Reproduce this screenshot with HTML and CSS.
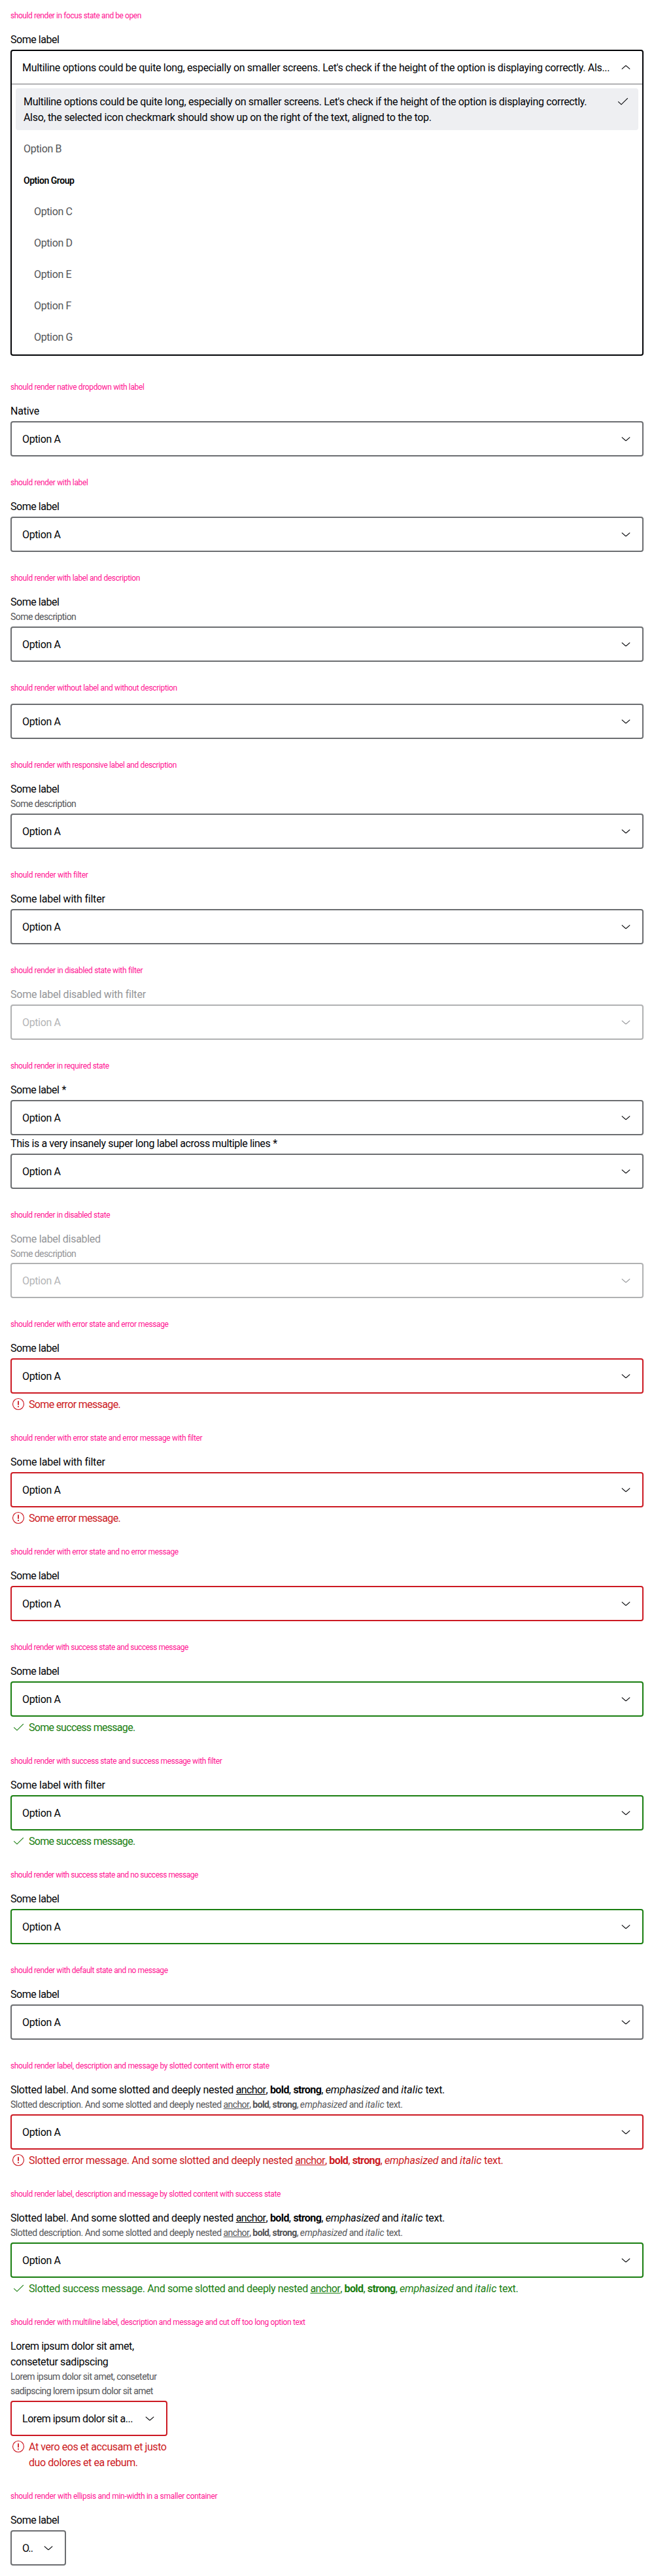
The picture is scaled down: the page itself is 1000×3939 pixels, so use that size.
FILE: index.html
```
<!DOCTYPE html>
<html lang="en">
<head>
<meta charset="utf-8">
<title>Select wrapper</title>
<link rel="stylesheet" href="styles.css">
</head>
<body>
<svg class="sprite" aria-hidden="true">
  <symbol id="down" viewBox="0 0 24 24"><path d="M5.8 9.6 11.6 14.6h.8L18.2 9.6"/></symbol>
  <symbol id="up" viewBox="0 0 24 24"><path d="M5.8 14.6 11.6 9.6h.8L18.2 14.6"/></symbol>
  <symbol id="check" viewBox="0 0 24 24"><path d="M5.2 12.3 10 16.8 19.8 7.2"/></symbol>
  <symbol id="error" viewBox="0 0 24 24"><circle cx="12" cy="12" r="8.5"/><path class="mark" d="M12 7.3v6.2M12 15v1.8"/></symbol>
</svg>

<section class="case case-open">
  <h2 class="title k43">should render in focus state and be open</h2>
  <div class="field">
    <div class="label k45">Some label</div>
    <div class="dropdown">
      <div class="select"><span class="value k32">Multiline options could be quite long, especially on smaller screens. Let's check if the height of the option is displaying correctly. Als...</span><svg class="icon"><use href="#up"/></svg></div>
      <ul class="options">
        <li class="option selected"><span class="k32">Multiline options could be quite long, especially on smaller screens. Let's check if the height of the option is displaying correctly.<br>Also, the selected icon checkmark should show up on the right of the text, aligned to the top.</span><svg class="icon"><use href="#check"/></svg></li>
        <li class="option">Option B</li>
        <li class="option group">Option Group</li>
        <li class="option nested">Option C</li>
        <li class="option nested">Option D</li>
        <li class="option nested">Option E</li>
        <li class="option nested">Option F</li>
        <li class="option nested">Option G</li>
      </ul>
    </div>
  </div>
</section>

<section class="case">
  <h2 class="title k35">should render native dropdown with label</h2>
  <div class="field">
    <div class="label k22">Native</div>
    <div class="select"><span class="value">Option A</span><svg class="icon"><use href="#down"/></svg></div>
  </div>
</section>

<section class="case">
  <h2 class="title k35">should render with label</h2>
  <div class="field">
    <div class="label k45">Some label</div>
    <div class="select"><span class="value">Option A</span><svg class="icon"><use href="#down"/></svg></div>
  </div>
</section>

<section class="case">
  <h2 class="title k36">should render with label and description</h2>
  <div class="field">
    <div class="label k45">Some label</div>
    <div class="description">Some description</div>
    <div class="select"><span class="value">Option A</span><svg class="icon"><use href="#down"/></svg></div>
  </div>
</section>

<section class="case">
  <h2 class="title k35">should render without label and without description</h2>
  <div class="field">
    <div class="select"><span class="value">Option A</span><svg class="icon"><use href="#down"/></svg></div>
  </div>
</section>

<section class="case">
  <h2 class="title k38">should render with responsive label and description</h2>
  <div class="field">
    <div class="label k45">Some label</div>
    <div class="description">Some description</div>
    <div class="select"><span class="value">Option A</span><svg class="icon"><use href="#down"/></svg></div>
  </div>
</section>

<section class="case">
  <h2 class="title k29">should render with filter</h2>
  <div class="field">
    <div class="label k22">Some label with filter</div>
    <div class="select"><span class="value">Option A</span><svg class="icon"><use href="#down"/></svg></div>
  </div>
</section>

<section class="case">
  <h2 class="title k33">should render in disabled state with filter</h2>
  <div class="field disabled">
    <div class="label k22">Some label disabled with filter</div>
    <div class="select"><span class="value">Option A</span><svg class="icon"><use href="#down"/></svg></div>
  </div>
</section>

<section class="case">
  <h2 class="title k37">should render in required state</h2>
  <div class="field">
    <div class="label k45">Some label<span class="required">*</span></div>
    <div class="select"><span class="value">Option A</span><svg class="icon"><use href="#down"/></svg></div>
  </div>
  <div class="field">
    <div class="label k40">This is a very insanely super long label across multiple lines<span class="required">*</span></div>
    <div class="select"><span class="value">Option A</span><svg class="icon"><use href="#down"/></svg></div>
  </div>
</section>

<section class="case">
  <h2 class="title k37">should render in disabled state</h2>
  <div class="field disabled">
    <div class="label k29">Some label disabled</div>
    <div class="description">Some description</div>
    <div class="select"><span class="value">Option A</span><svg class="icon"><use href="#down"/></svg></div>
  </div>
</section>

<section class="case">
  <h2 class="title k38">should render with error state and error message</h2>
  <div class="field error">
    <div class="label k45">Some label</div>
    <div class="select"><span class="value">Option A</span><svg class="icon"><use href="#down"/></svg></div>
    <div class="message k64"><svg class="icon"><use href="#error"/></svg><span>Some error message.</span></div>
  </div>
</section>

<section class="case">
  <h2 class="title k32">should render with error state and error message with filter</h2>
  <div class="field error">
    <div class="label k22">Some label with filter</div>
    <div class="select"><span class="value">Option A</span><svg class="icon"><use href="#down"/></svg></div>
    <div class="message k64"><svg class="icon"><use href="#error"/></svg><span>Some error message.</span></div>
  </div>
</section>

<section class="case">
  <h2 class="title k38">should render with error state and no error message</h2>
  <div class="field error">
    <div class="label k45">Some label</div>
    <div class="select"><span class="value">Option A</span><svg class="icon"><use href="#down"/></svg></div>
  </div>
</section>

<section class="case">
  <h2 class="title k49">should render with success state and success message</h2>
  <div class="field success">
    <div class="label k45">Some label</div>
    <div class="select"><span class="value">Option A</span><svg class="icon"><use href="#down"/></svg></div>
    <div class="message k71"><svg class="icon"><use href="#check"/></svg><span>Some success message.</span></div>
  </div>
</section>

<section class="case">
  <h2 class="title k42">should render with success state and success message with filter</h2>
  <div class="field success">
    <div class="label k22">Some label with filter</div>
    <div class="select"><span class="value">Option A</span><svg class="icon"><use href="#down"/></svg></div>
    <div class="message k71"><svg class="icon"><use href="#check"/></svg><span>Some success message.</span></div>
  </div>
</section>

<section class="case">
  <h2 class="title k49">should render with success state and no success message</h2>
  <div class="field success">
    <div class="label k45">Some label</div>
    <div class="select"><span class="value">Option A</span><svg class="icon"><use href="#down"/></svg></div>
  </div>
</section>

<section class="case">
  <h2 class="title k41">should render with default state and no message</h2>
  <div class="field">
    <div class="label k45">Some label</div>
    <div class="select"><span class="value">Option A</span><svg class="icon"><use href="#down"/></svg></div>
  </div>
</section>

<section class="case">
  <h2 class="title k35">should render label, description and message by slotted content with error state</h2>
  <div class="field error">
    <div class="label k29">Slotted label. And some slotted and deeply nested <a href="#">anchor</a>, <b>bold</b>, <strong>strong</strong>, <em>emphasized</em> and <i>italic</i> text.</div>
    <div class="description k51">Slotted description. And some slotted and deeply nested <a href="#">anchor</a>, <b>bold</b>, <strong>strong</strong>, <em>emphasized</em> and <i>italic</i> text.</div>
    <div class="select"><span class="value">Option A</span><svg class="icon"><use href="#down"/></svg></div>
    <div class="message k36"><svg class="icon"><use href="#error"/></svg><span>Slotted error message. And some slotted and deeply nested <a href="#">anchor</a>, <b>bold</b>, <strong>strong</strong>, <em>emphasized</em> and <i>italic</i> text.</span></div>
  </div>
</section>

<section class="case">
  <h2 class="title k36">should render label, description and message by slotted content with success state</h2>
  <div class="field success">
    <div class="label k29">Slotted label. And some slotted and deeply nested <a href="#">anchor</a>, <b>bold</b>, <strong>strong</strong>, <em>emphasized</em> and <i>italic</i> text.</div>
    <div class="description k51">Slotted description. And some slotted and deeply nested <a href="#">anchor</a>, <b>bold</b>, <strong>strong</strong>, <em>emphasized</em> and <i>italic</i> text.</div>
    <div class="select"><span class="value">Option A</span><svg class="icon"><use href="#down"/></svg></div>
    <div class="message k38"><svg class="icon"><use href="#check"/></svg><span>Slotted success message. And some slotted and deeply nested <a href="#">anchor</a>, <b>bold</b>, <strong>strong</strong>, <em>emphasized</em> and <i>italic</i> text.</span></div>
  </div>
</section>

<section class="case">
  <h2 class="title k35">should render with multiline label, description and message and cut off too long option text</h2>
  <div class="field error narrow">
    <div class="label k38">Lorem ipsum dolor sit amet,<br>consetetur sadipscing</div>
    <div class="description">Lorem ipsum dolor sit amet, consetetur<br>sadipscing lorem ipsum dolor sit amet</div>
    <div class="select"><span class="value k45">Lorem ipsum dolor sit a...</span><svg class="icon"><use href="#down"/></svg></div>
    <div class="message k42"><svg class="icon"><use href="#error"/></svg><span>At vero eos et accusam et justo<br>duo dolores et ea rebum.</span></div>
  </div>
</section>

<section class="case">
  <h2 class="title k29">should render with ellipsis and min-width in a smaller container</h2>
  <div class="field tiny">
    <div class="label k45">Some label</div>
    <div class="select"><span class="value k90">O..</span><svg class="icon"><use href="#down"/></svg></div>
  </div>
</section>
</body>
</html>
```
FILE: styles.css
```
* { box-sizing: border-box; }

body {
  margin: 0;
  background: #fff;
  color: #010205;
  font: 16px/24px Roboto, "Liberation Sans", sans-serif;
}

.sprite { display: none; }

.case { padding: 16px; }
.case-open { padding-bottom: 24px; }

.title {
  margin: 0 0 16px;
  color: #ff1493;
  font-size: 12px;
  font-weight: 400;
  line-height: 16px;
  white-space: nowrap;
}

.field { --state: #6b6d70; }
.error { --state: #cc1922; }
.success { --state: #197e10; }
.narrow { width: 240px; }
.tiny { width: 85px; }

.label {
  margin-bottom: 3px;
  padding-top: 1px;
  white-space: nowrap;
}
.label:has(+ .description) { margin-bottom: 0; }
.required { margin-left: 4px; }

.description {
  margin-bottom: 3px;
  color: #535457;
  font-size: 14px;
  line-height: 21.8px;
  letter-spacing: -0.55px;
  white-space: nowrap;
}

.select {
  display: flex;
  gap: 11px;
  height: 54px;
  padding: 13px 13px 11px 16px;
  border: 2px solid var(--state);
  border-radius: 4px;
}

.value {
  flex: 1;
  min-width: 0;
  padding-top: 1px;
  letter-spacing: -0.37px;
  white-space: nowrap;
}

.icon {
  flex: none;
  width: 24px;
  height: 24px;
  fill: none;
  stroke: currentColor;
  stroke-width: 1.15;
}
.mark { stroke-width: 1.8; }

.disabled { --state: #b0b1b2; }
.disabled .label,
.disabled .description,
.disabled .icon { color: #949598; }
.disabled .value { color: #b4b5b7; }

.message {
  display: flex;
  gap: 4px;
  margin-top: 4px;
  color: var(--state);
  white-space: nowrap;
}
.message span {
  margin-bottom: -1px;
  padding-top: 1px;
}

a { color: inherit; letter-spacing: -0.6px; }
b, strong { letter-spacing: -0.59px; }
em { letter-spacing: -0.15px; }
i { letter-spacing: 0.08px; }

.dropdown {
  height: 468px;
  border: 2px solid #010205;
  border-radius: 4px;
}
.dropdown .select {
  height: 51px;
  border: 0;
  border-bottom: 1px solid #6b6d70;
  border-radius: 0;
}

.options {
  display: flex;
  flex-direction: column;
  gap: 8px;
  margin: 0;
  padding: 6px;
  list-style: none;
}
.option {
  display: flex;
  justify-content: space-between;
  padding: 9px 12px 7px;
  border-radius: 4px;
  color: #535457;
  letter-spacing: -0.37px;
}
.option .icon { margin-top: -1px; }
.selected {
  background: #eeeff2;
  color: #010205;
  white-space: nowrap;
}
.group {
  color: #010205;
  font-size: 14px;
  font-weight: 600;
  letter-spacing: -0.47px;
}
.nested { padding-left: 28px; }

/* Letter-spacing steps, in hundredths of a pixel */
.k22 { letter-spacing: -0.22px; }
.k29 { letter-spacing: -0.29px; }
.k32 { letter-spacing: -0.32px; }
.k33 { letter-spacing: -0.33px; }
.k35 { letter-spacing: -0.35px; }
.k36 { letter-spacing: -0.36px; }
.k37 { letter-spacing: -0.37px; }
.k38 { letter-spacing: -0.38px; }
.k40 { letter-spacing: -0.4px; }
.k41 { letter-spacing: -0.41px; }
.k42 { letter-spacing: -0.42px; }
.k43 { letter-spacing: -0.43px; }
.k45 { letter-spacing: -0.45px; }
.k49 { letter-spacing: -0.49px; }
.k51 { letter-spacing: -0.51px; }
.k64 { letter-spacing: -0.64px; }
.k71 { letter-spacing: -0.71px; }
.k90 { letter-spacing: -0.9px; }
```
